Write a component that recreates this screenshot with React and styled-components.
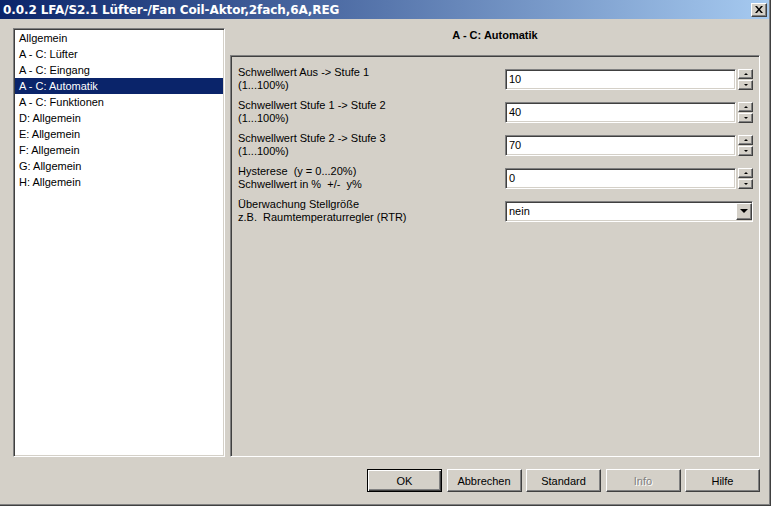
import React from "react";
import styled, { createGlobalStyle } from "styled-components";

const GlobalStyle = createGlobalStyle`
  body {
    margin: 0;
    background: #d4d0c8;
    font-family: "Liberation Sans", Arial, sans-serif;
    font-size: 11px;
  }
`;

const sunken = `
  border-style: solid;
  border-width: 1px;
  border-color: #808080 #ffffff #ffffff #808080;
  box-shadow: inset 1px 1px 0 #404040, inset -1px -1px 0 #d4d0c8;
`;

const raised = `
  border-style: solid;
  border-width: 1px;
  border-color: #ffffff #404040 #404040 #ffffff;
  box-shadow: inset -1px -1px 0 #808080;
`;

const Window = styled.div`
  width: 771px;
  height: 506px;
  box-sizing: border-box;
  background: #d4d0c8;
  display: flex;
  flex-direction: column;
  box-shadow: inset -1px -1px 0 #404040, inset -2px -2px 0 #808080;
  color: #000;
`;

const TitleBar = styled.div`
  height: 19px;
  margin-right: 2px;
  display: flex;
  align-items: center;
  justify-content: space-between;
  padding: 0 2px 0 3px;
  background: linear-gradient(to right, #0a246a, #a6caf0);
`;

const Title = styled.span`
  color: #fff;
  font-weight: bold;
  font-size: 12px;
  font-family: "DejaVu Sans", "Liberation Sans", sans-serif;
  letter-spacing: -0.1px;
  white-space: nowrap;
`;

const CloseButton = styled.div`
  width: 16px;
  height: 14px;
  box-sizing: border-box;
  background: #d4d0c8;
  ${raised}
  display: flex;
  align-items: center;
  justify-content: center;
`;

const Body = styled.div`
  display: flex;
  gap: 5px;
  padding: 9px 0 0 13px;
  height: 429px;
`;

const ListBox = styled.div`
  width: 212px;
  box-sizing: border-box;
  background: #fff;
  ${sunken}
  padding: 1px;
`;

const ListItem = styled.div`
  height: 16px;
  line-height: 16px;
  padding-left: 4px;
  white-space: nowrap;
  background: ${(p) => (p.$selected ? "#0a246a" : "transparent")};
  color: ${(p) => (p.$selected ? "#fff" : "#000")};
`;

const Page = styled.div`
  width: 530px;
  display: flex;
  flex-direction: column;
`;

const PageHeading = styled.div`
  height: 27px;
  line-height: 15px;
  text-align: center;
  font-weight: bold;
`;

const Panel = styled.div`
  flex: 1;
  box-sizing: border-box;
  ${sunken}
  padding: 10px 6px 0 7px;
`;

const ParamGrid = styled.div`
  display: grid;
  grid-template-columns: 1fr 248px;
  row-gap: 7px;
  align-items: center;
`;

const Label = styled.div`
  line-height: 13px;
  white-space: pre;
`;

const SpinField = styled.div`
  display: flex;
  gap: 2px;
  height: 21px;
`;

const Field = styled.div`
  flex: 1;
  box-sizing: border-box;
  background: #fff;
  ${sunken}
  padding-left: 3px;
  line-height: 19px;
  display: flex;
  align-items: center;
  justify-content: space-between;
`;

const Spin = styled.div`
  width: 15px;
  display: flex;
  flex-direction: column;
  gap: 1px;
`;

const SpinButton = styled.div`
  flex: 1;
  box-sizing: border-box;
  background: #d4d0c8;
  ${raised}
  display: flex;
  align-items: center;
  justify-content: center;
`;

const Arrow = styled.span`
  width: 0;
  height: 0;
  border-left: ${(p) => p.$size}px solid transparent;
  border-right: ${(p) => p.$size}px solid transparent;
  ${(p) => (p.$up ? "border-bottom" : "border-top")}: ${(p) => p.$h || p.$size}px solid #000;
`;

const DropButton = styled.div`
  width: 16px;
  height: 17px;
  box-sizing: border-box;
  background: #d4d0c8;
  ${raised}
  display: flex;
  align-items: center;
  justify-content: center;
`;

const Footer = styled.div`
  display: flex;
  justify-content: flex-end;
  gap: 4.5px;
  padding: 12px 11px 0 0;
`;

const Button = styled.div`
  width: 75px;
  height: 23px;
  box-sizing: border-box;
  background: #d4d0c8;
  display: flex;
  align-items: center;
  justify-content: center;
  ${(p) =>
    p.$default
      ? `border: 1px solid #000; box-shadow: inset 1px 1px 0 #fff, inset -1px -1px 0 #404040, inset -2px -2px 0 #808080;`
      : raised}
  color: ${(p) => (p.$disabled ? "#808080" : "#000")};
  text-shadow: ${(p) => (p.$disabled ? "1px 1px 0 #fff" : "none")};
`;

const items = [
  "Allgemein",
  "A - C: Lüfter",
  "A - C: Eingang",
  "A - C: Automatik",
  "A - C: Funktionen",
  "D: Allgemein",
  "E: Allgemein",
  "F: Allgemein",
  "G: Allgemein",
  "H: Allgemein",
];

const params = [
  { label: "Schwellwert Aus -> Stufe 1\n(1...100%)", value: "10" },
  { label: "Schwellwert Stufe 1 -> Stufe 2\n(1...100%)", value: "40" },
  { label: "Schwellwert Stufe 2 -> Stufe 3\n(1...100%)", value: "70" },
  { label: "Hysterese  (y = 0...20%)\nSchwellwert in %  +/-  y%", value: "0" },
  {
    label: "Überwachung Stellgröße\nz.B.  Raumtemperaturregler (RTR)",
    value: "nein",
    select: true,
  },
];

const buttons = [
  { text: "OK", def: true },
  { text: "Abbrechen" },
  { text: "Standard" },
  { text: "Info", disabled: true },
  { text: "Hilfe" },
];

export default function App() {
  return (
    <>
      <GlobalStyle />
      <Window>
        <TitleBar>
          <Title>0.0.2 LFA/S2.1 Lüfter-/Fan Coil-Aktor,2fach,6A,REG</Title>
          <CloseButton>
            <svg width="8" height="7" viewBox="0 0 8 7">
              <path d="M0 0h2l2 2.5L6 0h2L5 3.5 8 7H6L4 4.5 2 7H0l3-3.5z" fill="#000" />
            </svg>
          </CloseButton>
        </TitleBar>
        <Body>
          <ListBox>
            {items.map((it) => (
              <ListItem key={it} $selected={it === "A - C: Automatik"}>
                {it}
              </ListItem>
            ))}
          </ListBox>
          <Page>
            <PageHeading>A - C: Automatik</PageHeading>
            <Panel>
              <ParamGrid>
                {params.map((p) => (
                  <React.Fragment key={p.label}>
                    <Label>{p.label}</Label>
                    {p.select ? (
                      <SpinField>
                        <Field>
                          {p.value}
                          <DropButton>
                            <Arrow $size={4} $h={4} />
                          </DropButton>
                        </Field>
                      </SpinField>
                    ) : (
                      <SpinField>
                        <Field>{p.value}</Field>
                        <Spin>
                          <SpinButton>
                            <Arrow $size={2} $up />
                          </SpinButton>
                          <SpinButton>
                            <Arrow $size={2} />
                          </SpinButton>
                        </Spin>
                      </SpinField>
                    )}
                  </React.Fragment>
                ))}
              </ParamGrid>
            </Panel>
          </Page>
        </Body>
        <Footer>
          {buttons.map((b) => (
            <Button key={b.text} $default={b.def} $disabled={b.disabled}>
              {b.text}
            </Button>
          ))}
        </Footer>
      </Window>
    </>
  );
}
